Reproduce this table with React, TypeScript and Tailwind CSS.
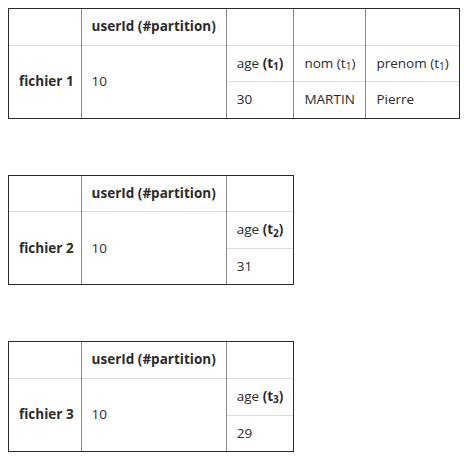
const cell = 'whitespace-nowrap px-[10px] py-2 text-left align-middle';
const firstCol = 'whitespace-nowrap pl-[10px] pr-[7px] py-2 text-left align-middle';
const vLine = 'border-l border-l-[#888]';
const hLine = 'border-t border-t-[#ddd]';

function Sub({ n }: { n: number }) {
  return <sub>{n}</sub>;
}

interface FileTableProps {
  label: string;
  userId: string;
  columns: { name: React.ReactNode; value: string }[];
}

function FileTable({ label, userId, columns }: FileTableProps) {
  return (
    <div className="self-start border border-[#2b2b2b]">
      <table className="border-collapse">
        <tbody>
          <tr>
            <td className={firstCol}></td>
            <th className={`${cell} ${vLine} font-bold`}>{userId}</th>
            {columns.map((_, i) => (
              <td key={i} className={`${cell} ${vLine}`}></td>
            ))}
          </tr>
          <tr>
            <th rowSpan={2} className={`${firstCol} ${hLine} font-bold`}>
              {label}
            </th>
            <td rowSpan={2} className={`${cell} ${hLine} ${vLine}`}>
              10
            </td>
            {columns.map((c, i) => (
              <td key={i} className={`${cell} ${hLine} ${vLine}`}>
                {c.name}
              </td>
            ))}
          </tr>
          <tr>
            {columns.map((c, i) => (
              <td key={i} className={`${cell} ${hLine} ${vLine}`}>
                {c.value}
              </td>
            ))}
          </tr>
        </tbody>
      </table>
    </div>
  );
}

export default function App() {
  return (
    <div
      className="flex min-h-[461px] flex-col gap-[56px] bg-white p-2 text-[13.5px] leading-[1.45] text-[#2b2b2b]"
      style={{ fontFamily: '"Open Sans", "Liberation Sans", sans-serif' }}
    >
      <FileTable
        label="fichier 1"
        userId="userId (#partition)"
        columns={[
          { name: <>age <b>(t<Sub n={1} />)</b></>, value: '30' },
          { name: <>nom (t<Sub n={1} />)</>, value: 'MARTIN' },
          { name: <>prenom (t<Sub n={1} />)</>, value: 'Pierre' },
        ]}
      />
      <FileTable
        label="fichier 2"
        userId="userId (#partition)"
        columns={[{ name: <>age <b>(t<Sub n={2} />)</b></>, value: '31' }]}
      />
      <FileTable
        label="fichier 3"
        userId="userId (#partition)"
        columns={[{ name: <>age <b>(t<Sub n={3} />)</b></>, value: '29' }]}
      />
    </div>
  );
}
